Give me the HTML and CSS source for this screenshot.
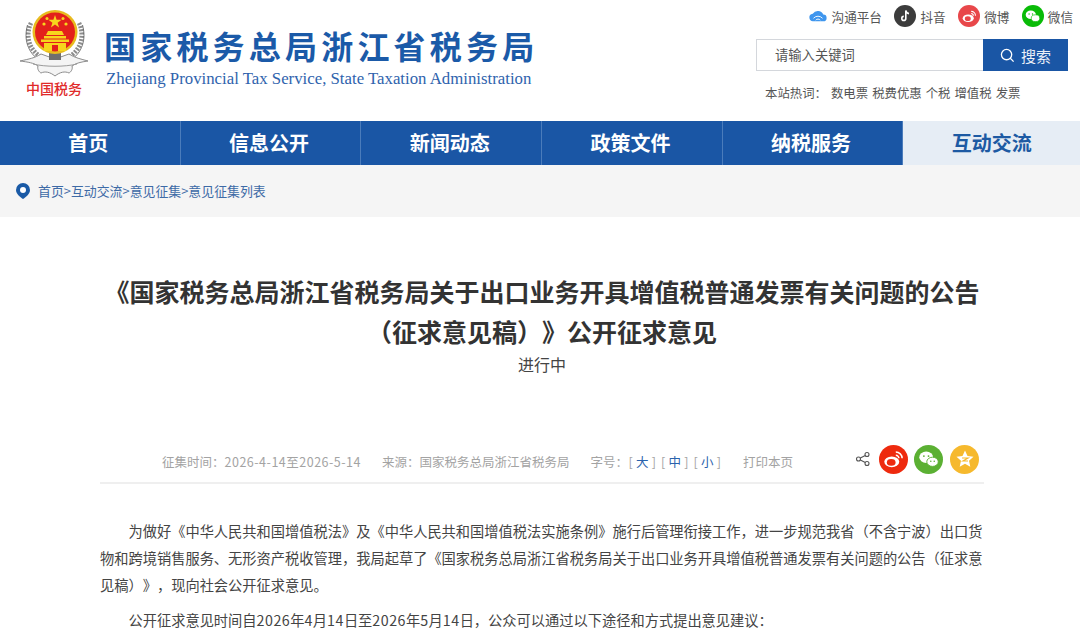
FILE: index.html
```html
<!DOCTYPE html>
<html lang="zh-CN">
<head>
<meta charset="utf-8">
<title>国家税务总局浙江省税务局</title>
<link rel="stylesheet" href="styles.css">
</head>
<body>
<header class="header">
  <div class="brand">
    <div class="emblem">
      <svg class="emblem-svg" viewBox="0 0 70 68" width="70" height="68">
        <g fill="none" stroke="#8c8c8c" stroke-width="4.500" stroke-dasharray="2 1.300">
          <path d="M12 14c-6 13-2 28 12 35"/>
          <path d="M60 14c6 13 2 28-12 35"/>
        </g>
        <g fill="none" stroke="#444" stroke-width=".7">
          <path d="M8.500 16c-4 14 0 28 13 36"/>
          <path d="M63.500 16c4 14 0 28-13 36"/>
        </g>
        <path d="M1 52c9-2 15-3 21-7l14 5 14-5c6 4 12 5 19 7-7 1-12 2-16 5 1 3-1 6-3 7-4-2-9-1-14 3-5-4-10-5-14-3-2-1-4-4-3-7-4-3-10-4-18-5z" fill="#f4f4f4" stroke="#8d8d8d" stroke-width="1"/>
        <path d="M14 55c12 3 32 3 44 0" fill="none" stroke="#9a9a9a" stroke-width="1"/>
        <path d="M30 44h12v7H30z" fill="#6e6e6e"/>
        <ellipse cx="36" cy="23" rx="22.500" ry="22" fill="#e8bb1e"/>
        <ellipse cx="36" cy="23" rx="20" ry="19.500" fill="#e3201b"/>
        <g fill="#f7d51d">
          <path d="M36 6l1.600 4.700h5l-4 3 1.500 4.800-4.100-3-4.100 3 1.500-4.800-4-3h5z"/>
          <circle cx="25" cy="15" r="1.600"/><circle cx="28" cy="9.500" r="1.500"/>
          <circle cx="44" cy="9.500" r="1.500"/><circle cx="47" cy="15" r="1.600"/>
          <path d="M29 22h14l2 4H27zM25 27h22v2.500H25zM22 30.500h28v2.500H22z"/>
          <path d="M25 34h22v8H25z"/>
        </g>
        <path d="M33 36h6v6h-6z" fill="#e3201b"/>
      </svg>
      <span class="emblem-text">中国税务</span>
    </div>
    <div class="brand-text">
      <h1 class="brand-title">国家税务总局浙江省税务局</h1>
      <p class="brand-sub">Zhejiang Provincial Tax Service, State Taxation Administration</p>
    </div>
  </div>
  <div class="tools">
    <ul class="links">
      <li class="link link-wide">
        <svg viewBox="0 0 24 16" width="18" height="12"><path d="M6 15a5 5 0 0 1-1-10 8 8 0 0 1 14 1 4.500 4.500 0 0 1 0 9z" fill="#3f96ee"/><path d="M6 11a8 8 0 0 1 12 0M9 13.500a4 4 0 0 1 6 0" fill="none" stroke="#fff" stroke-width="1.200"/></svg>
        <span>沟通平台</span>
      </li>
      <li class="link">
        <span class="round round-dark"><svg viewBox="0 0 20 20" width="16" height="16"><path d="M11 3v10a2.500 2.500 0 1 1-2.500-2.500M11 3c.4 2.300 1.800 3.700 4 4" fill="none" stroke="#fff" stroke-width="2"/></svg></span>
        <span>抖音</span>
      </li>
      <li class="link">
        <span class="round round-red"><svg viewBox="0 0 20 20" width="17" height="17"><ellipse cx="8.500" cy="12" rx="6.500" ry="4.500" fill="#fff"/><ellipse cx="8" cy="12.500" rx="3.500" ry="2.700" fill="#e8474a"/><path d="M12 4a5 5 0 0 1 5 5M12 6.500a2.500 2.500 0 0 1 2.500 2.500" fill="none" stroke="#fff" stroke-width="1.300"/></svg></span>
        <span>微博</span>
      </li>
      <li class="link">
        <span class="round round-green"><svg viewBox="0 0 20 20" width="17" height="17"><ellipse cx="8" cy="8" rx="6" ry="5" fill="#fff"/><ellipse cx="13.500" cy="12" rx="5" ry="4" fill="#fff" stroke="#09bb07" stroke-width=".8"/><circle cx="6" cy="7" r=".8" fill="#09bb07"/><circle cx="10" cy="7" r=".8" fill="#09bb07"/></svg></span>
        <span>微信</span>
      </li>
    </ul>
    <div class="search">
      <div class="search-input">请输入关键词</div>
      <div class="search-btn">
        <svg viewBox="0 0 16 16" width="15" height="15"><circle cx="7" cy="7" r="5.500" fill="none" stroke="#fff" stroke-width="1.400"/><path d="M11 11l3.500 3.500" stroke="#fff" stroke-width="1.400"/></svg>
        <span>搜索</span>
      </div>
    </div>
    <div class="hot">
      <span>本站热词：</span>
      <span>数电票</span><span>税费优惠</span><span>个税</span><span>增值税</span><span>发票</span>
    </div>
  </div>
</header>
<nav class="nav">
  <a class="nav-item">首页</a>
  <a class="nav-item">信息公开</a>
  <a class="nav-item">新闻动态</a>
  <a class="nav-item">政策文件</a>
  <a class="nav-item">纳税服务</a>
  <a class="nav-item nav-active">互动交流</a>
</nav>
<div class="crumbs">
  <svg class="pin" viewBox="0 0 14 16" width="14" height="16"><path d="M7 0a7 7 0 0 1 7 7c0 4-4 7-7 9-3-2-7-5-7-9a7 7 0 0 1 7-7z" fill="#1a5aa6"/><circle cx="7" cy="7" r="3" fill="#fff"/></svg>
  <span>首页&gt;互动交流&gt;意见征集&gt;意见征集列表</span>
</div>
<main class="main">
  <h2 class="title">《国家税务总局浙江省税务局关于出口业务开具增值税普通发票有关问题的公告<br>（征求意见稿）》公开征求意见</h2>
  <p class="status">进行中</p>
  <div class="meta">
    <span>征集时间：<span class="num">2026-4-14至2026-5-14</span></span>
    <span>来源：国家税务总局浙江省税务局</span>
    <span class="sizes">
      <span>字号：</span>
      <span class="size">[<b>大</b>]</span>
      <span class="size">[<b>中</b>]</span>
      <span class="size">[<b>小</b>]</span>
    </span>
    <span>打印本页</span>
    <div class="share">
      <svg viewBox="0 0 16 16" width="16" height="16"><g fill="none" stroke="#555" stroke-width="1.100"><circle cx="3.500" cy="8" r="2"/><circle cx="12" cy="3.500" r="2"/><circle cx="12" cy="12.500" r="2"/><path d="M5.300 7l5-2.600M5.300 9l5 2.600"/></g></svg>
      <span class="disc disc-red"><svg viewBox="0 0 20 20" width="23" height="23"><ellipse cx="8.500" cy="12" rx="6.500" ry="4.700" fill="#fff"/><ellipse cx="8" cy="12.500" rx="3.800" ry="2.900" fill="#ee2a0e"/><path d="M12 3.500a5.500 5.500 0 0 1 5.500 5.500M12 6.300a2.700 2.700 0 0 1 2.700 2.700" fill="none" stroke="#fff" stroke-width="1.300"/></svg></span>
      <span class="disc disc-green"><svg viewBox="0 0 20 20" width="23" height="23"><ellipse cx="8" cy="8" rx="6" ry="5" fill="#fff"/><ellipse cx="13.500" cy="12" rx="5" ry="4" fill="#fff" stroke="#5bb033" stroke-width=".8"/><circle cx="6" cy="7" r=".8" fill="#5bb033"/><circle cx="10" cy="7" r=".8" fill="#5bb033"/><circle cx="12" cy="11.500" r=".7" fill="#5bb033"/><circle cx="15" cy="11.500" r=".7" fill="#5bb033"/></svg></span>
      <span class="disc disc-gold"><svg viewBox="0 0 20 20" width="20" height="20"><path d="M10 1.500l2.500 5.500 6 .7-4.500 4 1.300 6-5.300-3-5.300 3 1.300-6-4.500-4 6-.7z" fill="#fff"/><path d="M7 9h6l-5 3h5" fill="none" stroke="#f6b92d" stroke-width="1.200"/></svg></span>
    </div>
  </div>
  <article class="body">
    <p>为做好《中华人民共和国增值税法》及《中华人民共和国增值税法实施条例》施行后管理衔接工作，进一步规范我省（不含宁波）出口货物和跨境销售服务、无形资产税收管理，我局起草了《国家税务总局浙江省税务局关于出口业务开具增值税普通发票有关问题的公告（征求意见稿）》，现向社会公开征求意见。</p>
    <p>公开征求意见时间自<span class="num">2026</span>年<span class="num">4</span>月<span class="num">14</span>日至<span class="num">2026</span>年<span class="num">5</span>月<span class="num">14</span>日，公众可以通过以下途径和方式提出意见建议：</p>
  </article>
</main>
</body>
</html>
```

FILE: styles.css
```css
* { box-sizing: border-box; }
html, body { margin: 0; padding: 0; }
body {
  width: 1080px;
  height: 637px;
  overflow: hidden;
  background: #fff;
  font-family: "Noto Sans CJK SC", "Noto Sans", sans-serif;
  color: #333;
  text-spacing-trim: space-all;
}
ul, h1, h2, p { margin: 0; padding: 0; }
ul { list-style: none; }

.header {
  height: 121px;
  display: flex;
  justify-content: space-between;
  padding: 0 12px 0 19px;
}
.brand { display: flex; align-items: flex-start; padding-top: 9px; }
.emblem { width: 70px; display: flex; flex-direction: column; align-items: center; }
.emblem-svg { display: block; }
.emblem-text {
  font-size: 14px;
  line-height: 18px;
  font-weight: 500;
  color: #e02a2a;
  margin-top: 2px;
  white-space: nowrap;
}
.brand-text { margin-left: 15px; padding-top: 13px; }
.brand-title {
  font-size: 32px;
  line-height: 46px;
  font-weight: 700;
  letter-spacing: 4.200px;
  color: #1b5aa8;
  white-space: nowrap;
}
.brand-sub {
  font-family: "Liberation Serif", serif;
  font-size: 16.800px;
  line-height: 20px;
  margin-top: 1px;
  margin-left: 2px;
  color: #2f63ad;
  white-space: nowrap;
}

.tools { width: 312px; display: flex; flex-direction: column; }
.links {
  display: flex;
  justify-content: flex-end;
  gap: 12.500px;
  height: 39px;
  padding-top: 5px;
  margin-right: -5px;
  font-size: 12.600px;
  color: #555;
}
.link { display: flex; align-items: center; gap: 4px; height: 22px; }
.link-wide { gap: 5px; }
.round { width: 22px; height: 22px; border-radius: 50%; display: flex; align-items: center; justify-content: center; }
.round-dark { background: #3c3c3c; }
.round-red { background: #e8474a; }
.round-green { background: #09bb07; }

.search { display: flex; height: 32px; }
.search-input {
  flex: 1;
  border: 1px solid #d4d7dc;
  border-right: 0;
  padding-left: 18px;
  font-size: 13.300px;
  line-height: 30px;
  color: #555;
}
.search-btn {
  width: 85px;
  background: #1a56a5;
  color: #eaf0f8;
  font-size: 15px;
  display: flex;
  align-items: center;
  justify-content: center;
  gap: 6px;
}
.hot {
  display: flex;
  margin-top: 13px;
  padding-left: 9px;
  font-size: 12.400px;
  line-height: 18px;
  color: #555;
  gap: 4px;
}

.nav { display: flex; height: 44px; background: #1a56a5; }
.nav-item {
  width: 180.700px;
  display: flex;
  align-items: center;
  justify-content: center;
  padding: 0 3px 2px 0;
  font-size: 20px;
  font-weight: 700;
  color: #fff;
  border-right: 1px solid #4b7cbb;
}
.nav-active {
  flex: 1;
  width: auto;
  padding-right: 0;
  background: #e6edf5;
  color: #1d5aa3;
  border-right: 0;
}

.crumbs {
  height: 52px;
  background: #f5f5f5;
  display: flex;
  align-items: center;
  gap: 8px;
  padding: 0 0 1px 16px;
  font-size: 12.900px;
  color: #3d6aa6;
}

.main { padding: 54px 96px 0 100px; }
.title {
  font-size: 25px;
  line-height: 40px;
  font-weight: 700;
  color: #333;
  text-align: center;
  white-space: nowrap;
}
.status {
  font-size: 16px;
  line-height: 26px;
  text-align: center;
  color: #444;
}
.meta {
  margin-top: 66px;
  height: 41px;
  border-bottom: 2px solid #efefef;
  display: flex;
  align-items: center;
  gap: 21px;
  padding: 0 5px 3px 62px;
  font-size: 12.500px;
  color: #a3a3a3;
  white-space: nowrap;
}
.num { letter-spacing: .5px; }
.sizes { display: flex; margin-right: -4px; }
.size { display: flex; width: 32.500px; justify-content: space-between; padding-right: 5px; }
.size b { font-weight: 400; color: #2a62ac; }
.sizes > span:first-child { width: 38px; }
.share { margin: 0 0 4px auto; display: flex; align-items: center; gap: 6px; }
.share > svg { margin-right: 2px; }
.disc { width: 29px; height: 29px; border-radius: 50%; display: flex; align-items: center; justify-content: center; }
.disc-red { background: #ee2a0e; }
.disc-green { background: #5bb033; }
.disc-gold { background: #f6b92d; margin-left: 1px; }

.body { padding-top: 33px; font-size: 14.240px; line-height: 27px; color: #444; }
.body p { text-indent: 2em; margin-bottom: 8px; }
```
